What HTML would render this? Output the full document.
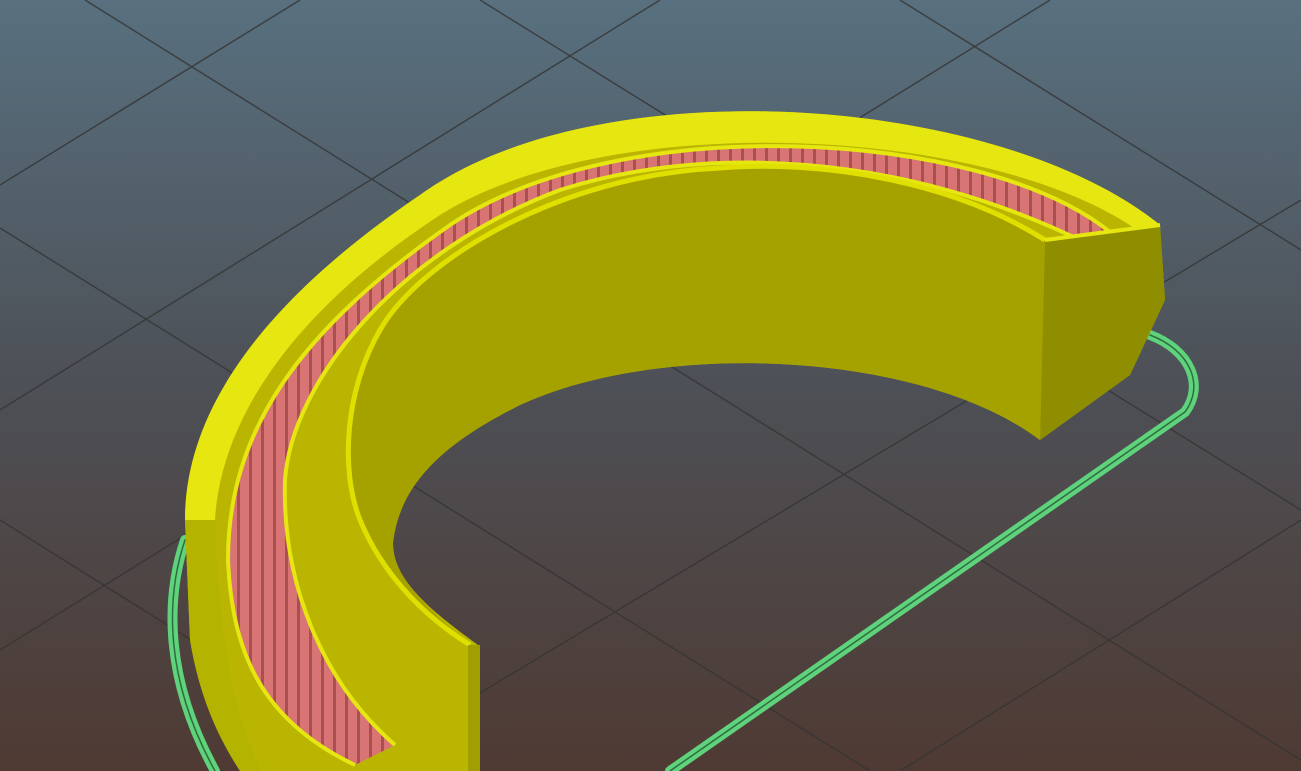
<!DOCTYPE html>
<html><head><meta charset="utf-8"><style>
html,body{margin:0;padding:0;width:1301px;height:771px;overflow:hidden}
svg{display:block}
</style></head><body>
<svg width="1301" height="771" viewBox="0 0 1301 771" xmlns="http://www.w3.org/2000/svg">
<defs>
<linearGradient id="bg" x1="0" y1="0" x2="0" y2="1">
<stop offset="0" stop-color="#58707f"/>
<stop offset="0.5" stop-color="#4d5056"/>
<stop offset="1" stop-color="#4f3a33"/>
</linearGradient>
<pattern id="pink" width="12" height="12" patternUnits="userSpaceOnUse">
<rect width="12" height="12" fill="#d97474"/>
<rect x="9" width="3" height="12" fill="#a85050"/>
</pattern>
</defs>
<rect width="1301" height="771" fill="url(#bg)"/>
<g stroke="#353535" stroke-width="1.5" fill="none" opacity="0.8">
<line x1="85" y1="0" x2="1301" y2="760"/>
<line x1="0" y1="228" x2="870" y2="771"/>
<line x1="480" y1="0" x2="1301" y2="510"/>
<line x1="900" y1="0" x2="1301" y2="250"/>
<line x1="0" y1="520" x2="400" y2="771"/>
<line x1="660" y1="0" x2="0" y2="410"/>
<line x1="1050" y1="0" x2="0" y2="650"/>
<line x1="1301" y1="200" x2="350" y2="771"/>
<line x1="1301" y1="520" x2="900" y2="771"/>
<line x1="300" y1="0" x2="0" y2="185"/>
</g>
<g fill="none" stroke-linecap="round">
<path d="M1150,335 C1190,350 1205,385 1185,412 L670,771 M185,540 C165,600 165,680 215,771" stroke="#5fd27c" stroke-width="10"/>
<path d="M1150,335 C1190,350 1205,385 1185,412 L670,771 M185,540 C165,600 165,680 215,771" stroke="#2f6d40" stroke-width="1.5"/>
</g>
<path d="M1160,225 C1000,95 600,65 420,195 C250,310 185,420 185,520 L190,640 C200,700 220,740 240,771 L480,771 L478,645 C430,610 393,580 393,543 C400,480 450,440 520,405 C660,340 920,350 1040,440 L1130,375 L1165,300 Z" fill="#b9b500"/>
<path d="M185,520 L190,640 C200,700 220,740 240,771 L262,771 C235,720 218,640 215,520 Z" fill="#b3b300"/>
<path d="M1160,225 C1000,95 600,65 420,195 C250,310 185,420 185,520 L215,520 C220,430 280,320 440,215 C610,108 990,125 1140,232 Z" fill="#e6e610"/>
<path d="M1110,232 C980,128 620,110 450,225 C300,330 228,430 228,560 C232,650 260,720 355,765 L395,745 C320,680 282,580 285,480 C292,380 400,250 560,190 C700,145 900,150 1090,245 Z" fill="url(#pink)"/>
<path d="M1110,232 C980,128 620,110 450,225 C300,330 228,430 228,560 C232,650 260,720 355,765" fill="none" stroke="#e6e610" stroke-width="4"/>
<path d="M395,745 C320,680 282,580 285,480 C292,380 400,250 560,190 C700,145 900,150 1090,245" fill="none" stroke="#e6e610" stroke-width="4"/>
<path d="M1045,240 C950,180 820,160 720,168 C560,175 420,260 380,330 C345,390 340,470 360,520 C385,580 430,620 470,645 C430,610 393,580 393,543 C400,480 450,440 520,405 C660,340 920,350 1040,440 Z" fill="#a5a200"/>
<path d="M1045,240 C950,180 820,160 720,168 C560,175 420,260 380,330 C345,390 340,470 360,520 C385,580 430,620 470,645" fill="none" stroke="#e0e000" stroke-width="5"/>
<path d="M1045,240 L1160,225 L1165,300 L1130,375 L1040,440 Z" fill="#8f8d00"/>
<path d="M1045,240 L1160,225" stroke="#e6e610" stroke-width="4"/>
<path d="M468,645 L480,645 L480,771 L468,771 Z" fill="#a09e00"/>
</svg>
</body></html>
